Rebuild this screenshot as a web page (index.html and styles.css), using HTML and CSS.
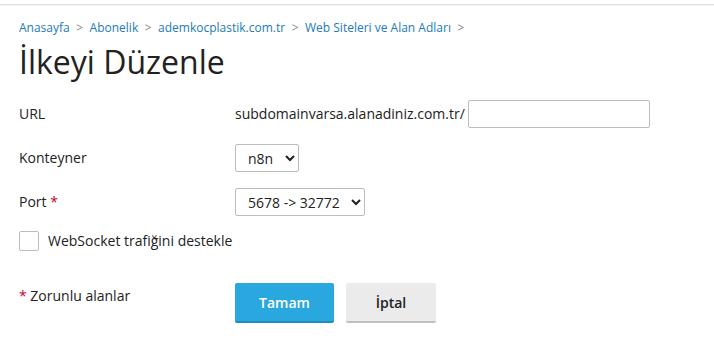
FILE: index.html
```html
<!DOCTYPE html>
<html lang="tr">
<head>
  <meta charset="utf-8">
  <title>İlkeyi Düzenle</title>
  <link rel="stylesheet" href="styles.css">
</head>
<body>
  <div class="top-shadow"></div>

  <div class="page">
    <nav class="breadcrumbs">
      <a href="#">Anasayfa</a><span class="sep">&gt;</span><a href="#">Abonelik</a><span class="sep">&gt;</span><a href="#">ademkocplastik.com.tr</a><span class="sep">&gt;</span><a href="#">Web Siteleri ve Alan Adları</a><span class="sep">&gt;</span>
    </nav>

    <h1>İlkeyi Düzenle</h1>

    <form class="form" onsubmit="return false">
      <div class="row">
        <label class="label">URL</label>
        <div class="field">
          <span class="prefix">subdomainvarsa.alanadiniz.com.tr/</span>
          <input type="text" class="text-input">
        </div>
      </div>

      <div class="row">
        <label class="label">Konteyner</label>
        <div class="field">
          <select class="select select-small">
            <option>n8n</option>
          </select>
        </div>
      </div>

      <div class="row">
        <label class="label">Port <span class="req">*</span></label>
        <div class="field">
          <select class="select select-port">
            <option>5678 -&gt; 32772</option>
          </select>
        </div>
      </div>

      <div class="check-row">
        <span class="checkbox"></span>
        <span>WebSocket trafiğini destekle</span>
      </div>

      <div class="row actions">
        <div class="label"><span class="req">*</span> Zorunlu alanlar</div>
        <div class="field buttons">
          <button class="btn btn-primary">Tamam</button>
          <button class="btn btn-cancel">İptal</button>
        </div>
      </div>
    </form>
  </div>
</body>
</html>
```

FILE: styles.css
```css
body {
  margin: 0;
  background: #fff;
  color: #222;
  font-family: "Open Sans", "Liberation Sans", sans-serif;
  font-size: 14px;
}

.top-shadow {
  height: 4px;
  border-bottom: 1px solid #e2e2e2;
  box-shadow: 0 1px 1px rgba(0,0,0,0.05);
}

.page {
  padding: 14px 19px 0;
}

.breadcrumbs {
  font-size: 12px;
  line-height: 18px;
  height: 18px;
}

.breadcrumbs a {
  color: #1c7bb6;
  text-decoration: none;
}

.breadcrumbs .sep {
  color: #888;
  margin: 0 6.5px;
}

h1 {
  margin: 4px 0 17px;
  font-size: 32px;
  font-weight: 400;
  line-height: 42px;
  color: #222;
}

.row {
  display: grid;
  grid-template-columns: 216px 1fr;
  align-items: center;
  min-height: 28px;
  margin-bottom: 16px;
}

.label {
  line-height: 20px;
}

.req {
  color: #c6002b;
}

.field {
  display: flex;
  align-items: center;
  gap: 3px;
}

.prefix {
  line-height: 20px;
}

.text-input {
  width: 182px;
  height: 28px;
  box-sizing: border-box;
  border: 1px solid #bcbcbc;
  border-radius: 2px;
  padding: 0 6px;
  font: inherit;
}

.select {
  height: 28px;
  box-sizing: border-box;
  border: 1px solid #bcbcbc;
  border-radius: 2px;
  background: #fff;
  font: inherit;
  color: #222;
  padding: 0 4px 0 8px;
}

.select-small {
  width: 64px;
}

.select-port {
  width: 130px;
}

.check-row {
  display: flex;
  align-items: center;
  gap: 9px;
  margin-top: -1px;
  line-height: 20px;
}

.checkbox {
  width: 18px;
  height: 18px;
  border: 1px solid #bcbcbc;
  border-radius: 2px;
  background: #fff;
}

.actions {
  margin-top: 32px;
  align-items: start;
}

.actions .label {
  margin-top: 3px;
}

.buttons {
  gap: 12px;
}

.btn {
  height: 40px;
  box-sizing: border-box;
  border: none;
  border-radius: 2px;
  font: inherit;
  font-weight: 600;
  cursor: pointer;
}

.btn-primary {
  width: 99px;
  background: #29a8df;
  border-bottom: 2px solid #1e8cbc;
  color: #fff;
}

.btn-cancel {
  width: 90px;
  background: #ebebeb;
  border-bottom: 2px solid #c0c0c0;
  color: #222;
}
```
